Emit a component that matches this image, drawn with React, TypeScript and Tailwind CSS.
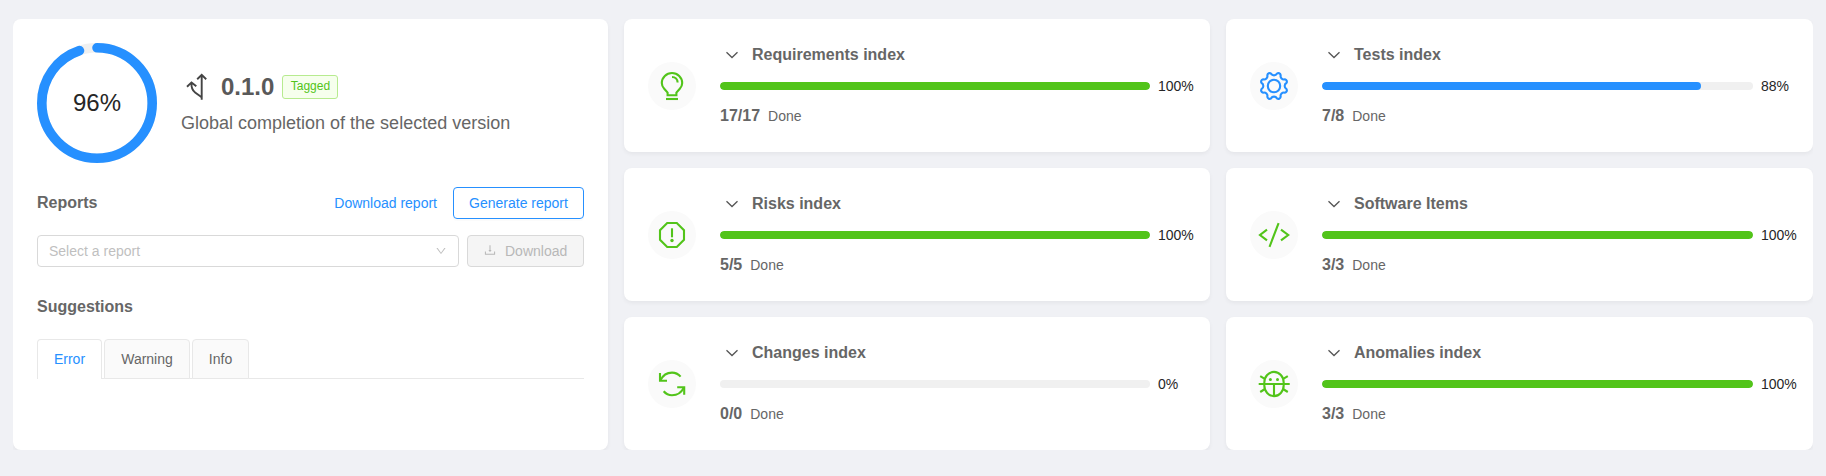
import React from "react";
import { AiOutlineDown, AiOutlineDownload } from "react-icons/ai";

const GREEN = "#52c41a";
const BLUE = "#2690ff";

const polar = (deg: number, r: number) => {
  const a = (deg * Math.PI) / 180;
  return `${(24 + r * Math.cos(a)).toFixed(2)} ${(24 + r * Math.sin(a)).toFixed(2)}`;
};

const gearPath =
  `M${polar(-13.5, 12.8)}` +
  Array.from({ length: 8 }, (_, k) => {
    const a = k * 45;
    return `A3.4 3.4 0 0 0 ${polar(a + 13.5, 12.8)}A2.4 2.4 0 0 1 ${polar(a + 31.5, 12.8)}`;
  }).join("") +
  "Z";

const icons = {
  bulb: (
    <>
      <path d="M19.6 33.2h8.8v-2.6l3.4-3.9c1.5-1.6 2.4-3.5 2.4-5.700a10.200 10 0 0 0-20.400 0c0 2.200.9 4.100 2.400 5.700l3.400 3.900z" />
      <path d="M24 15c3.200 0 5.600 2.400 5.600 5.600" />
      <path d="M18 37h12" />
    </>
  ),
  risk: (
    <>
      <path d="M19.200 12h9.600L36 19.200v9.600L28.800 36h-9.600L12 28.800v-9.600z" />
      <path d="M24 17.300v9" />
      <circle cx="24" cy="29.500" r="1.700" fill="currentColor" stroke="none" />
    </>
  ),
  change: (
    <>
      <path d="M12 13v7.700h7" />
      <path d="M12.400 20.400C14.800 15.400 19 12.600 24 12.600c3.200 0 6.300 1.400 8.600 4" />
      <path d="M36.200 34.800v-7.500h-7" />
      <path d="M35.800 27.600C33.400 32.600 29 35.200 24 35.200c-3.200 0-6.200-1.500-8.300-4" />
    </>
  ),
  gear: (
    <>
      <path d={gearPath} strokeLinejoin="round" />
      <circle cx="24" cy="24" r="6.200" />
    </>
  ),
  code: (
    <>
      <path d="M17 18.700L10 24l7 5.400M31 18.700L38.200 24l-7.200 5.400M28.600 12.200l-9.100 23.600" />
    </>
  ),
  bug: (
    <>
      <rect x="14.300" y="11.900" width="19.400" height="24.200" rx="9.700" ry="10.800" />
      <path d="M8.700 24h31M24 24v12" />
      <path d="M10.200 16.200l4.600 2.700M37.800 16.200l-4.600 2.700M10.200 32l4.800-3M37.800 32l-4.800-3" />
      <circle cx="20.400" cy="19.600" r="1.500" fill="currentColor" stroke="none" />
      <circle cx="27.500" cy="19.600" r="1.500" fill="currentColor" stroke="none" />
    </>
  ),
};

type Item = {
  title: string;
  icon: keyof typeof icons;
  percent: number;
  count: string;
};

const items: Item[] = [
  { title: "Requirements index", icon: "bulb", percent: 100, count: "17/17" },
  { title: "Tests index", icon: "gear", percent: 88, count: "7/8" },
  { title: "Risks index", icon: "risk", percent: 100, count: "5/5" },
  { title: "Software Items", icon: "code", percent: 100, count: "3/3" },
  { title: "Changes index", icon: "change", percent: 0, count: "0/0" },
  { title: "Anomalies index", icon: "bug", percent: 100, count: "3/3" },
];

function IndexCard({ title, icon, percent, count }: Item) {
  const color = icon === "gear" ? BLUE : GREEN;
  return (
    <section className="flex h-[133px] items-center gap-6 rounded-lg bg-white px-6 shadow-[0_2px_4px_rgba(0,0,0,0.05)]">
      <div className="size-12 shrink-0 rounded-full bg-[#fafafa]" style={{ color }}>
        <svg viewBox="0 0 48 48" className="size-12" fill="none" stroke="currentColor" strokeWidth="2.100">
          {icons[icon]}
        </svg>
      </div>
      <div className="min-w-0 flex-1">
        <div className="flex h-6 items-center">
          <svg viewBox="0 0 12 8" className="ml-1.5 h-2 w-3" fill="none" stroke="#555" strokeWidth="1.300">
            <path d="M.5 1.200L6 6.500l5.500-5.300" />
          </svg>
          <h2 className="ml-3.5 text-base font-bold text-[#666]">{title}</h2>
        </div>
        <div className="mt-2 flex h-[22px] items-center gap-2">
          <div className="h-2 flex-1 overflow-hidden rounded-full bg-[#f0f0f0]">
            <div className="h-2 rounded-full" style={{ width: `${percent}%`, backgroundColor: color }} />
          </div>
          <span className="w-7 text-sm leading-[22px] whitespace-nowrap text-[#262626]">{percent}%</span>
        </div>
        <div className="mt-[7px] flex h-6 items-baseline gap-2 text-[#666]">
          <span className="text-base font-bold">{count}</span>
          <span className="text-sm">Done</span>
        </div>
      </div>
    </section>
  );
}

function Ring() {
  const length = 2 * Math.PI * 46;
  return (
    <div className="grid size-[120px] place-items-center">
      <svg viewBox="0 0 100 100" className="col-start-1 row-start-1 size-[120px] -rotate-90" fill="none" strokeWidth="8">
        <circle cx="50" cy="50" r="46" stroke="#f0f0f0" />
        <circle cx="50" cy="50" r="46" stroke={BLUE} strokeLinecap="round" strokeDasharray={`${length * 0.96 - 3.800} ${length}`} />
      </svg>
      <span className="col-start-1 row-start-1 text-2xl text-[#262626]">96%</span>
    </div>
  );
}

export default function App() {
  return (
    <main className="h-[476px] w-[1826px] bg-[#f0f1f5] pt-[19px] pl-[13px] font-['Liberation_Sans',Arial,sans-serif]">
      <div className="flex h-[431px] w-[1800px] gap-4 overflow-hidden">
        <section className="w-[595px] shrink-0 rounded-lg bg-white p-6 shadow-[0_2px_4px_rgba(0,0,0,0.05)]">
          <div className="flex items-center gap-6">
            <Ring />
            <div className="pt-px">
              <div className="flex h-8 items-center">
                <svg viewBox="0 0 24 28" className="ml-1 h-7 w-6" fill="none" stroke="#444" strokeWidth="1.900">
                  <path d="M16.700 2v24.700M12.200 6.300l4.500-4.400 4.500 4.400" />
                  <path d="M6.500 9.700c-.3 4.500 1 7.800 3.600 9.700l6.600 4.900M2 13.800l4.500-4.400 4.800 3.900" />
                </svg>
                <span className="ml-3 text-2xl font-bold text-[#595959]">0.1.0</span>
                <span className="ml-2 flex h-6 w-14 items-center justify-center rounded-[3px] border border-[#b7eb8f] bg-[#f6ffed] pb-px text-xs text-[#52c41a]">
                  Tagged
                </span>
              </div>
              <p className="mt-1.5 text-lg text-[#666]">Global completion of the selected version</p>
            </div>
          </div>

          <div className="mt-6 flex h-8 items-center">
            <h2 className="text-base font-bold text-[#666]">Reports</h2>
            <button className="ml-auto px-4 text-sm text-[#2690ff]">Download report</button>
            <button className="h-8 w-[131px] rounded border border-[#2690ff] text-sm text-[#2690ff] shadow-[0_2px_0_rgba(0,0,0,0.015)]">
              Generate report
            </button>
          </div>

          <div className="mt-4 flex h-8 gap-2">
            <div className="flex w-[422px] items-center justify-between rounded border border-[#d9d9d9] px-[11px] text-sm text-[#bfbfbf]">
              <span>Select a report</span>
              <AiOutlineDown className="size-3" />
            </div>
            <button className="flex w-[117px] items-center rounded border border-[#d9d9d9] bg-[#f5f5f5] px-[15px] text-sm text-[#b8b8b8]">
              <AiOutlineDownload className="mb-0.5 size-3.5" />
              <span className="ml-2">Download</span>
            </button>
          </div>

          <h2 className="mt-7 text-base font-bold text-[#666]">Suggestions</h2>

          <div className="mt-5 flex h-10 gap-0.5 text-sm text-[#666] shadow-[inset_0_-1px_#e8e8e8]">
            <button className="w-[65px] rounded-t border border-b-0 border-[#e8e8e8] bg-white pb-px text-[#2690ff]">Error</button>
            <button className="w-[86px] rounded-t border border-[#e8e8e8] bg-[#fafafa]">Warning</button>
            <button className="w-[57px] rounded-t border border-[#e8e8e8] bg-[#fafafa]">Info</button>
          </div>
        </section>

        <div className="grid flex-1 grid-cols-[586px_587px] content-start gap-4">
          {items.map((item) => (
            <IndexCard key={item.title} {...item} />
          ))}
        </div>
      </div>
    </main>
  );
}
